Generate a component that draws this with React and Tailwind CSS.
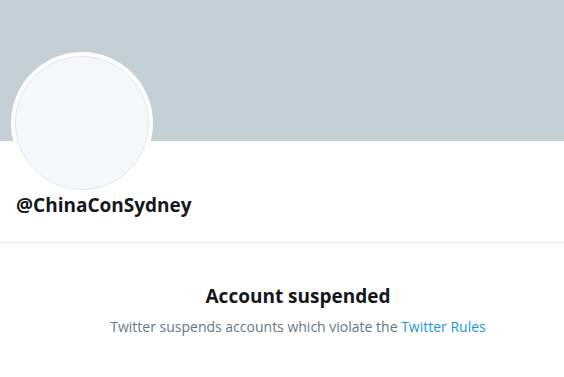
export default function App() {
    return (
        <div className="w-[564px] h-[377px] bg-white overflow-hidden" style={{ fontFamily: '"Open Sans", "Noto Sans", sans-serif' }}>
            {/* Banner */}
            <div className="h-[141px] bg-[#c4cfd6]" />

            {/* Avatar + handle */}
            <div className="px-[11px]">
                <div className="-mt-[89px] w-[142px] h-[142px] rounded-full bg-white p-[4px]">
                    <div className="w-full h-full rounded-full bg-[#f5f8fa] border border-[#e1e8ed]" />
                </div>
                <div className="-mt-[1px] pl-[5px] text-[19px] leading-[24px] font-bold text-[#14171a]">
                    @ChinaConSydney
                </div>
            </div>

            <div className="mt-[25px] border-b border-[#e6ecf0]" />

            {/* Suspended notice */}
            <div className="pt-[41px] pl-[32px] flex flex-col items-center text-center">
                <h2 className="text-[19px] leading-[24px] font-bold text-[#14171a]">Account suspended</h2>
                <p className="mt-[9px] text-[14px] leading-[20px] text-[#657786]">
                    Twitter suspends accounts which violate the{' '}
                    <a className="text-[#1b95e0]">Twitter Rules</a>
                </p>
            </div>
        </div>
    );
}
